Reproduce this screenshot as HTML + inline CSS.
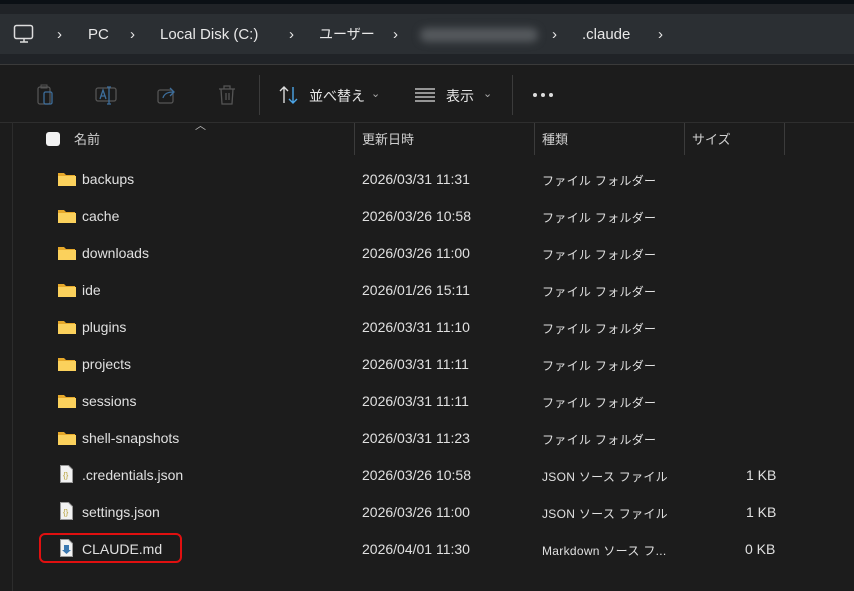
<!DOCTYPE html>
<html><head><meta charset="utf-8"><style>
body{margin:0;width:854px;height:591px;background:#1c1c1c;overflow:hidden;font-family:"Segoe UI","Liberation Sans","Noto Sans CJK JP",sans-serif;color:#e6e6e6;position:relative}
.a{position:absolute;white-space:nowrap;line-height:18px}
.top{position:absolute;left:0;top:0;width:854px;height:4px;background:#0b1015}
.band{position:absolute;left:0;top:4px;width:854px;height:60px;background:#202327}
.crumb{position:absolute;left:0;top:14px;width:854px;height:40px;background:#2b2f33}
.sep{position:absolute;left:0;top:64px;width:854px;height:1px;background:#3a3a3a}
.t{font-size:15px;color:#e8e8e8;line-height:20px}
.row{font-size:14px;color:#e0e0e0}
.jp{font-size:12px;letter-spacing:0.3px}
.g{color:#cfcfcf;font-size:13px}
.vl{position:absolute;width:1px;background:#3b3b3b}
</style></head><body>
<div class="top"></div><div class="band"></div><div class="crumb"></div>
<svg class="a" style="left:13px;top:24px" width="22" height="20" viewBox="0 0 22 20"><rect x="1.5" y="1.5" width="18" height="13" rx="2" fill="none" stroke="#ddd" stroke-width="1.5"/><path d="M7 18h8M11 15v3" stroke="#ddd" stroke-width="1.5"/></svg>
<div class="a t" style="left:57px;top:25px">›</div>
<div class="a t" style="left:88px;top:25px">PC</div>
<div class="a t" style="left:130px;top:25px">›</div>
<div class="a t" style="left:160px;top:25px">Local Disk (C:)</div>
<div class="a t" style="left:289px;top:25px">›</div>
<div class="a t" style="left:319px;top:24px;font-size:14px">ユーザー</div>
<div class="a t" style="left:393px;top:25px">›</div>
<div class="a" style="left:420px;top:28px;width:118px;height:14px;background:#55595d;border-radius:7px;filter:blur(4px)"></div>
<div class="a t" style="left:552px;top:25px">›</div>
<div class="a t" style="left:582px;top:25px">.claude</div>
<div class="a t" style="left:658px;top:25px">›</div>
<div class="sep"></div>
<svg class="a" style="left:36px;top:84px" width="20" height="22" viewBox="0 0 20 22"><rect x="2" y="3" width="12" height="17" rx="2" fill="none" stroke="#555" stroke-width="1.3"/><rect x="8" y="8" width="8" height="12" rx="1.5" fill="none" stroke="#3d6e9c" stroke-width="1.3"/><rect x="5" y="1" width="6" height="3" fill="none" stroke="#555"/></svg>
<svg class="a" style="left:95px;top:85px" width="22" height="20" viewBox="0 0 22 20"><rect x="1" y="3" width="20" height="13" rx="2" fill="none" stroke="#555" stroke-width="1.3"/><path d="M5 14l3-9 3 9M6 11h4" stroke="#3d6e9c" stroke-width="1.3" fill="none"/><path d="M14 2v17M12 2h4M12 19h4" stroke="#3d6e9c" stroke-width="1.3"/></svg>
<svg class="a" style="left:157px;top:85px" width="20" height="20" viewBox="0 0 20 20"><rect x="1" y="5" width="15" height="13" rx="2" fill="none" stroke="#555" stroke-width="1.3"/><path d="M6 13c1-4 5-6 10-6M13 3l4 4-4 4" stroke="#3d6e9c" stroke-width="1.3" fill="none"/></svg>
<svg class="a" style="left:217px;top:84px" width="20" height="22" viewBox="0 0 20 22"><path d="M2 5h16M7 5V2h6v3M4 5l1 15h10l1-15M9 9v7M12 9v7" stroke="#555" stroke-width="1.3" fill="none"/></svg>
<div class="vl" style="left:259px;top:75px;height:40px"></div>
<svg class="a" style="left:278px;top:85px" width="22" height="20" viewBox="0 0 22 20"><path d="M6 18V2M2 6l4-4 4 4" stroke="#ddd" stroke-width="1.4" fill="none"/><path d="M15 2v16M11 14l4 4 4-4" stroke="#4ca6e8" stroke-width="1.4" fill="none"/></svg>
<div class="a" style="left:309px;top:87px;font-size:14px">並べ替え</div>
<div class="a" style="left:371px;top:85px;font-size:11px;color:#aaa">⌄</div>
<svg class="a" style="left:414px;top:88px" width="22" height="14"><path d="M1 1h20M1 5h20M1 9h20M1 13h20" stroke="#ddd" stroke-width="1.3"/></svg>
<div class="a" style="left:446px;top:87px;font-size:14px">表示</div>
<div class="a" style="left:483px;top:85px;font-size:11px;color:#aaa">⌄</div>
<div class="vl" style="left:512px;top:75px;height:40px"></div>
<div class="a" style="left:533px;top:93px;width:4px;height:4px;border-radius:2px;background:#ddd;box-shadow:8px 0 #ddd,16px 0 #ddd"></div>
<div class="a" style="left:0;top:122px;width:854px;height:1px;background:#2e2e2e"></div>
<div class="vl" style="left:12px;top:122px;height:469px;background:#2c2c2c"></div>
<div class="a" style="left:46px;top:132px;width:14px;height:14px;background:#f2f2f2;border-radius:3px"></div>
<div class="a" style="left:195px;top:117px;font-size:11px;color:#bbb">︿</div>
<div class="a g" style="left:74px;top:131px">名前</div>
<div class="vl" style="left:354px;top:123px;height:32px"></div>
<div class="a g" style="left:362px;top:131px">更新日時</div>
<div class="vl" style="left:534px;top:123px;height:32px"></div>
<div class="a g" style="left:542px;top:131px">種類</div>
<div class="vl" style="left:684px;top:123px;height:32px"></div>
<div class="a g" style="left:692px;top:131px">サイズ</div>
<div class="vl" style="left:784px;top:123px;height:32px"></div>

<div id="rows"></div>
<script>
var d=[["f","backups","2026/03/31 11:31","ファイル フォルダー",""],["f","cache","2026/03/26 10:58","ファイル フォルダー",""],["f","downloads","2026/03/26 11:00","ファイル フォルダー",""],["f","ide","2026/01/26 15:11","ファイル フォルダー",""],["f","plugins","2026/03/31 11:10","ファイル フォルダー",""],["f","projects","2026/03/31 11:11","ファイル フォルダー",""],["f","sessions","2026/03/31 11:11","ファイル フォルダー",""],["f","shell-snapshots","2026/03/31 11:23","ファイル フォルダー",""],["j",".credentials.json","2026/03/26 10:58","JSON ソース ファイル","1 KB"],["j","settings.json","2026/03/26 11:00","JSON ソース ファイル","1 KB"],["m","CLAUDE.md","2026/04/01 11:30","Markdown ソース フ...","0 KB"]];
var h="";
d.forEach(function(r,i){var y=170+i*37;
var ic=r[0]=="f"?'<svg class="a" style="left:57px;top:'+(y+1)+'px" width="19" height="16"><path d="M1 2h6l2 2h9v11H1z" fill="#e6a82a"/><rect x="1" y="5" width="18" height="10" fill="#fbd15c"/></svg>':
'<svg class="a" style="left:60px;top:'+(y-1)+'px" width="13" height="18"><path d="M.5 .5h8l4 4v13H.5z" fill="#f2f2f2" stroke="#999"/>'+(r[0]=="j"?'<text x="3" y="13" font-size="8" fill="#b8a23a" font-family="Liberation Sans">{}</text>':'<path d="M4 6h5v5h2l-4.5 4L2 11h2z" fill="#3b78b0"/>')+'</svg>';
h+=ic+'<div class="a row" style="left:82px;top:'+y+'px">'+r[1]+'</div><div class="a row" style="left:362px;top:'+y+'px">'+r[2]+'</div><div class="a row jp" style="left:542px;top:'+(y+2)+'px">'+r[3]+'</div><div class="a row" style="left:'+(r[4]=="0 KB"?745:746)+'px;top:'+y+'px">'+r[4]+'</div>';});
document.getElementById("rows").innerHTML=h;
</script>
<div class="a" style="left:39px;top:533px;width:143px;height:30px;border:2px solid #e01010;border-radius:6px;box-sizing:border-box"></div>
</body></html>
